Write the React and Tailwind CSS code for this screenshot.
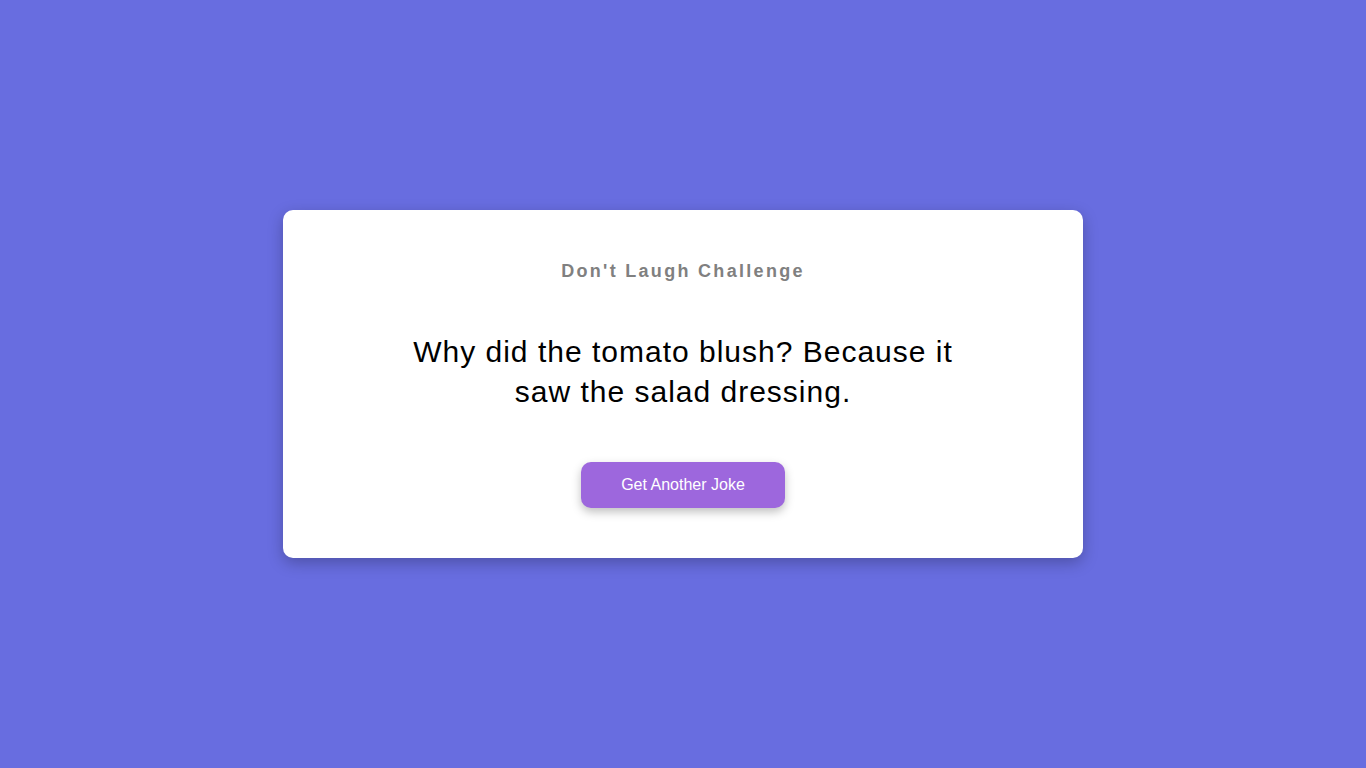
import React, { useState } from "react";

const jokes = [
  "Why did the tomato blush? Because it saw the salad dressing.",
  "Why don't skeletons fight each other? They don't have the guts.",
  "What do you call fake spaghetti? An impasta.",
];

const App = () => {
  const [index, setIndex] = useState(0);

  const nextJoke = () => {
    setIndex((i) => (i + 1) % jokes.length);
  };

  return (
    <div
      className="min-h-screen w-full flex items-center justify-center bg-[#686de0]"
      style={{ fontFamily: '"Liberation Sans", Arial, sans-serif' }}
    >
      <div className="w-[800px] bg-white rounded-[10px] shadow-[0_5px_15px_rgba(0,0,0,0.25)] pt-[51px] pb-[50px] px-[40px] flex flex-col items-center">
        <h1 className="text-[18px] leading-[21px] font-bold tracking-[2.3px] text-[#808080]">
          Don't Laugh Challenge
        </h1>
        <p className="mt-[50px] max-w-[550px] text-center text-[30px] leading-[40px] tracking-[1px] text-black">
          {jokes[index]}
        </p>
        <button
          onClick={nextJoke}
          className="mt-[50px] w-[204px] h-[46px] rounded-[10px] bg-[#9d67dd] text-white text-[16px] shadow-[0_4px_10px_rgba(0,0,0,0.25)] cursor-pointer"
        >
          Get Another Joke
        </button>
      </div>
    </div>
  );
};

export default App;
